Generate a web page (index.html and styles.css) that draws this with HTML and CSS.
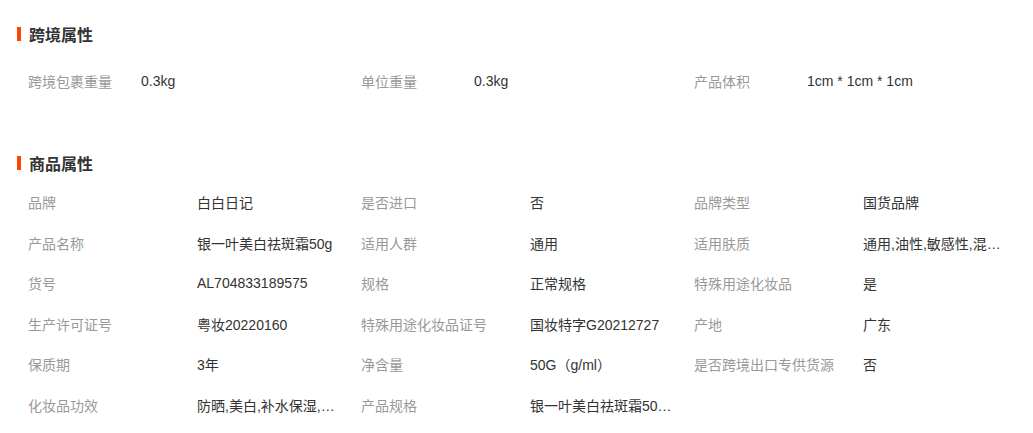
FILE: index.html
```html
<!DOCTYPE html>
<html lang="zh-CN">
<head>
  <meta charset="UTF-8">
  <title>商品属性</title>
  <link rel="stylesheet" href="styles.css">
</head>
<body>

  <div class="attrs">
    <!-- 跨境属性 -->
    <div class="section">
      <h3 class="section-title">跨境属性</h3>
      <ul class="attr-list cross">
        <li><span class="label">跨境包裹重量</span><span class="value">0.3kg</span></li>
        <li><span class="label">单位重量</span><span class="value">0.3kg</span></li>
        <li><span class="label">产品体积</span><span class="value">1cm * 1cm * 1cm</span></li>
      </ul>
    </div>

    <!-- 商品属性 -->
    <div class="section goods">
      <h3 class="section-title">商品属性</h3>
      <ul class="attr-list">
        <li><span class="label">品牌</span><span class="value">白白日记</span></li>
        <li><span class="label">是否进口</span><span class="value">否</span></li>
        <li><span class="label">品牌类型</span><span class="value">国货品牌</span></li>
        <li><span class="label">产品名称</span><span class="value">银一叶美白祛斑霜50g</span></li>
        <li><span class="label">适用人群</span><span class="value">通用</span></li>
        <li><span class="label">适用肤质</span><span class="value">通用,油性,敏感性,混…</span></li>
        <li><span class="label">货号</span><span class="value">AL704833189575</span></li>
        <li><span class="label">规格</span><span class="value">正常规格</span></li>
        <li><span class="label">特殊用途化妆品</span><span class="value">是</span></li>
        <li><span class="label">生产许可证号</span><span class="value">粤妆20220160</span></li>
        <li><span class="label">特殊用途化妆品证号</span><span class="value">国妆特字G20212727</span></li>
        <li><span class="label">产地</span><span class="value">广东</span></li>
        <li><span class="label">保质期</span><span class="value">3年</span></li>
        <li><span class="label">净含量</span><span class="value">50G（g/ml）</span></li>
        <li><span class="label">是否跨境出口专供货源</span><span class="value">否</span></li>
        <li><span class="label">化妆品功效</span><span class="value">防晒,美白,补水保湿,…</span></li>
        <li><span class="label">产品规格</span><span class="value">银一叶美白祛斑霜50…</span></li>
      </ul>
    </div>
  </div>

</body>
</html>
```

FILE: styles.css
```css
body {
  margin: 0;
  background-color: #fff;
  color: #333;
  font-family: "Liberation Sans", "Noto Sans CJK SC", sans-serif;
  font-size: 14px;
}

.attrs {
  padding: 19px 0 0 17px;
}

.section-title {
  display: flex;
  align-items: center;
  gap: 8px;
  height: 30px;
  margin: 0;
  font-size: 16px;
  font-weight: bold;
  color: #333;
}

.section-title::before {
  content: "";
  width: 4px;
  height: 14px;
  background-color: #f40;
}

.goods {
  margin-top: 47px;
}

/* attribute grid */
.attr-list {
  display: grid;
  grid-template-columns: repeat(3, 333px);
  grid-auto-rows: 40px;
  margin: 12px 0 0 11px;
  padding: 0;
  list-style: none;
}

.goods .attr-list {
  grid-auto-rows: 40.5px;
  margin-top: 4px;
}

.attr-list li {
  display: flex;
  align-items: center;
}

.label {
  flex: none;
  width: 169px;
  color: #999;
  white-space: nowrap;
}

.cross .label {
  width: 113px;
}

.value {
  color: #333;
  white-space: nowrap;
}
```
